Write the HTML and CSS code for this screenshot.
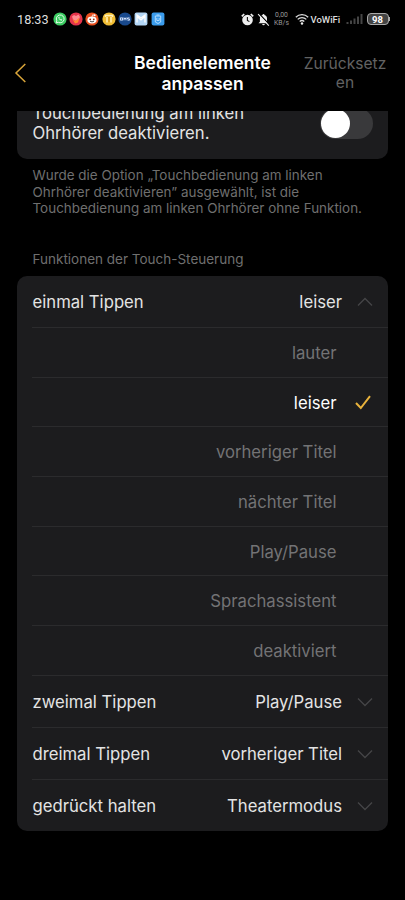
FILE: index.html
```
<!DOCTYPE html>
<html lang="de">
<head>
<meta charset="utf-8">
<meta name="viewport" content="width=device-width, initial-scale=1">
<title>Bedienelemente anpassen</title>
<link rel="stylesheet" href="styles.css">
</head>
<body>
<div class="status">
  <span class="clock">18:33</span>
  <div class="apps">
    <svg viewBox="0 0 14 14"><circle cx="7" cy="7" r="6.6" fill="#3ccb62"/><path d="M3.2 11l.6-2.2a3.9 3.9 0 1 1 1.5 1.5z" fill="none" stroke="#e4ffe9" stroke-width="1"/><path d="M5.3 5.2c.2 1.900 1.500 3.200 3.400 3.500l.5-1-1.200-.6-.5.5L6.300 6.400l.4-.6-.5-1z" fill="#e4ffe9"/></svg>
    <svg viewBox="0 0 14 14"><circle cx="7" cy="7" r="6.600" fill="#e5344b"/><path d="M3 4.500l2-1.500 2 1 2.500-1.500L11 5 9.800 7.500 7 9 4 7.500z" fill="#ff8b91"/><path d="M3.500 7l3 2 4-3.500L9 10.500 6 11.500z" fill="#ff8a2e"/></svg>
    <svg viewBox="0 0 14 14"><circle cx="7" cy="7" r="6.600" fill="#e8501f"/><ellipse cx="7" cy="8" rx="4.600" ry="3.400" fill="#fff"/><circle cx="9.600" cy="3.300" r="1" fill="#fff"/><path d="M7 5l.6-2.200 1.600.4" stroke="#fff" stroke-width=".7" fill="none"/><circle cx="5.200" cy="7.300" r=".9" fill="#9c2b10"/><circle cx="8.800" cy="7.300" r=".9" fill="#9c2b10"/><path d="M5 9.200q2 1.400 4 0" stroke="#222" stroke-width=".8" fill="none"/></svg>
    <svg viewBox="0 0 14 14"><circle cx="7" cy="7" r="6.600" fill="#f0bd35"/><path d="M3.500 5V3.500h7V5M5 5v5.500M9 5v5.500" stroke="#fff0b5" stroke-width="1.500" fill="none"/><path d="M7 5v5" stroke="#cf8f19" stroke-width="1.200"/></svg>
    <svg viewBox="0 0 14 14"><circle cx="7" cy="7" r="6.600" fill="#19498c"/><path d="M2.500 5.700v2.600M4.500 5.700v2.600M2.500 5.900h2M2.500 8.100h2M6 8.300V5.700l1 1.500 1-1.500v2.600M11.500 5.900h-2v1.100h2v1.200h-2" stroke="#dce9ff" stroke-width=".9" fill="none"/></svg>
    <svg viewBox="0 0 14 14"><rect x=".6" y=".6" width="12.800" height="12.800" rx="2" fill="#b3d6f6"/><path d="M3 10.500v-6l4 3.500 4-3.500v6M3 4.500V3l4 3 4-3v1.500" stroke="#fff" stroke-width="1.300" fill="none"/></svg>
    <svg viewBox="0 0 14 14"><rect x=".6" y=".6" width="12.800" height="12.800" rx="2" fill="#3b9cec"/><path d="M4.300 4h5.400v6L7 11.500 4.300 10zM5.500 3h3M5.800 6v2.500M8.200 6v2.500M5.800 8.500h2.400" stroke="#b9e0ff" stroke-width=".9" fill="none"/></svg>
  </div>
  <div class="system">
    <svg class="alarm" viewBox="0 0 13 13"><circle cx="6.500" cy="7" r="5.300" fill="#eee"/><path d="M.8 3.300L3.200 1M12.200 3.300L9.800 1" stroke="#eee" stroke-width="1.700"/><path d="M6.400 4v3.400l2 1.200" stroke="#111" stroke-width="1.100" fill="none"/></svg>
    <svg class="bell" viewBox="0 0 13 13"><path d="M1.500 10.200l1.400-1.500V5.500C3 3.500 4 2.500 5.500 2.100a1 1 0 0 1 2 0C9 2.500 10 3.600 10 5.500v3.200l1.500 1.500zM5.200 11h2.600a1.300 1.300 0 0 1-2.600 0z" fill="#eee"/><path d="M2 .6l10.500 11.200" stroke="#000" stroke-width="1.300"/><path d="M1.100 1.200l10.700 11.400" stroke="#eee" stroke-width="1.100"/></svg>
    <div class="speed"><div>0,00</div><div>KB/s</div></div>
    <svg class="wifi" viewBox="0 0 14 12"><path d="M.8 4.200a9 9 0 0 1 12.400 0M2.700 6.400a6.200 6.200 0 0 1 8.600 0M4.700 8.500a3.500 3.500 0 0 1 4.600 0" fill="none" stroke="#ddd" stroke-width="1.300"/><circle cx="7" cy="10.500" r="1.200" fill="#eee"/></svg>
    <span class="vowifi">VoWiFi</span>
    <svg class="signal" viewBox="0 0 17 12"><path d="M1.500 11V9M5 11V7.500M8.500 11V5.500M12 11V3.500M15.500 11V1" stroke="#454545" stroke-width="2"/></svg>
    <span class="battery">98</span><span class="battery-tip"></span>
  </div>
</div>
<header class="header">
  <svg class="back" viewBox="0 0 14 22"><path d="M11.300 2L2 11l9.300 9" fill="none" stroke="#d9a53a" stroke-width="1.500"/></svg>
  <h1>Bedienelemente<br>anpassen</h1>
  <span class="reset">Zurücksetz<br>en</span>
</header>
<main>
  <div class="scroll-edge">
    <section class="card toggle-card">
      <p>Touchbedienung am linken<br>Ohrhörer deaktivieren.</p>
      <span class="switch"></span>
    </section>
  </div>
  <p class="note">Wurde die Option „Touchbedienung am linken<br>Ohrhörer deaktivieren” ausgewählt, ist die<br>Touchbedienung am linken Ohrhörer ohne Funktion.</p>
  <h2>Funktionen der Touch-Steuerung</h2>
  <section class="card list">
    <div class="row"><span>einmal Tippen</span><span class="value">leiser</span><svg class="chev" viewBox="0 0 16 10"><path d="M1 8.500l7-7 7 7"/></svg></div>
    <div class="option">lauter</div>
    <div class="option selected">leiser<svg class="check" viewBox="0 0 16 15"><path d="M1 8l4.800 5L15 1.200"/></svg></div>
    <div class="option">vorheriger Titel</div>
    <div class="option">nächter Titel</div>
    <div class="option">Play/Pause</div>
    <div class="option">Sprachassistent</div>
    <div class="option">deaktiviert</div>
    <div class="row"><span>zweimal Tippen</span><span class="value">Play/Pause</span><svg class="chev" viewBox="0 0 16 10"><path d="M1 1.500l7 7 7-7"/></svg></div>
    <div class="row"><span>dreimal Tippen</span><span class="value">vorheriger Titel</span><svg class="chev" viewBox="0 0 16 10"><path d="M1 1.500l7 7 7-7"/></svg></div>
    <div class="row"><span>gedrückt halten</span><span class="value">Theatermodus</span><svg class="chev" viewBox="0 0 16 10"><path d="M1 1.500l7 7 7-7"/></svg></div>
  </section>
</main>
</body>
</html>
```
FILE: styles.css
```
* { box-sizing: border-box; }
body { margin: 0; height: 900px; overflow: hidden; background: #000; color: #e4e4e4; font-family: Inter, "Liberation Sans", sans-serif; }
h1, h2, p { margin: 0; font-weight: 400; }
svg { display: block; flex: none; }

.status { display: flex; align-items: center; height: 38px; padding: 0 15px 0 17px; font-family: Roboto, sans-serif; }
.clock { width: 35.500px; font-size: 12.700px; color: #ddd; }
.apps { display: flex; gap: 2.400px; }
.apps svg { width: 14px; height: 14px; }
.system { display: flex; align-items: center; margin-left: auto; }
.alarm { width: 13px; height: 13px; }
.bell { width: 13px; height: 13px; margin-left: 3px; }
.speed { width: 16px; margin-left: 4px; font-size: 6.800px; line-height: 8px; color: #999; text-align: center; white-space: nowrap; }
.wifi { width: 14px; height: 12px; margin-left: 5px; }
.vowifi { width: 29px; margin-left: 2px; font-size: 9.500px; font-weight: 500; color: #ddd; white-space: nowrap; }
.signal { width: 17px; height: 12px; margin-left: 6px; }
.battery { display: flex; align-items: center; justify-content: center; width: 22px; height: 12px; margin-left: 4px; border: 1.500px solid #aaa; border-radius: 4px; background: #444; color: #fff; font-size: 9.500px; font-weight: 700; line-height: 9px; }
.battery-tip { width: 1.500px; height: 4px; background: #aaa; }

.header { display: grid; grid-template-columns: 120px 1fr 120px; height: 73px; padding-top: 14px; }
.back { width: 14px; height: 22px; margin: 10px 0 0 13.500px; }
.header h1 { color: #fff; font-size: 17.500px; font-weight: 600; line-height: 21px; text-align: center; white-space: nowrap; }
.reset { color: #626262; font-size: 15.600px; line-height: 19px; text-align: center; padding-top: 2px; }

main { padding: 0 17px; }
.card { background: #1c1c1e; border-radius: 10px; }
.scroll-edge { display: flex; align-items: flex-end; height: 48px; overflow: hidden; }
.toggle-card { display: flex; flex: none; align-items: center; justify-content: space-between; width: 100%; height: 71px; padding: 0 15px 0 15.500px; font-size: 16.650px; line-height: 20px; }
.toggle-card p { margin-top: -2px; }
.switch { width: 53px; height: 31px; padding: 1px; border-radius: 16px; background: #39393b; }
.switch::before { content: ""; display: block; width: 29px; height: 29px; border-radius: 50%; background: #fff; }
.note { padding: 8px 15px 0 15.500px; color: #6f6f6f; font-size: 13.450px; line-height: 16.500px; white-space: nowrap; }
h2 { height: 59px; padding: 34px 15px 0 15.500px; color: #6f6f6f; font-size: 13.500px; line-height: 17px; }
.list { height: 555px; overflow: hidden; }
.row, .option { display: flex; align-items: center; margin-left: 15px; padding-top: 1px; border-top: 1px solid #2b2b2d; font-size: 16.700px; }
.row { height: 52px; padding-left: .5px; padding-right: 15px; }
.row:first-child { height: 51.500px; border-top: 0; }
.value { margin-left: auto; }
.chev { width: 16px; height: 10px; margin-left: 15px; }
.chev path { fill: none; stroke: #454547; stroke-width: 1.300; }
.option { height: 49.700px; justify-content: flex-end; padding-right: 51.500px; color: #737375; position: relative; }
.selected { color: #fff; }
.check { position: absolute; right: 17.500px; width: 16px; height: 15px; }
.check path { fill: none; stroke: #e8b23c; stroke-width: 2; }
```
